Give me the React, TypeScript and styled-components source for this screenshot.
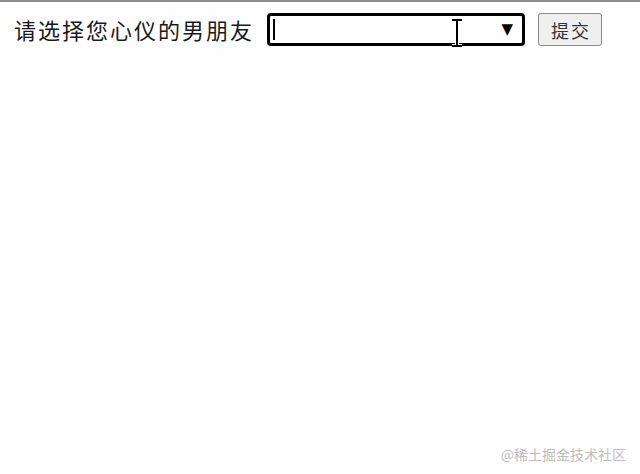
import React from 'react';
import styled, { createGlobalStyle } from 'styled-components';

const GlobalStyle = createGlobalStyle`
  html, body {
    margin: 0;
    padding: 0;
    background: #fefefe;
  }
  body {
    border-top: 2px solid #8c8c8c;
    min-height: 472px;
    font-family: "Noto Sans CJK SC", "Liberation Serif", serif;
  }
`;

const Page = styled.div`
  position: relative;
  height: 472px;
`;

const Form = styled.form`
  display: flex;
  align-items: center;
  gap: 13px;
  padding: 11px 0 0 14px;
`;

const Label = styled.label`
  width: 240px;
  font-size: 22px;
  letter-spacing: 2px;
  color: #1a1a1a;
  line-height: 33px;
  white-space: nowrap;
`;

const Field = styled.div`
  position: relative;
  box-sizing: border-box;
  width: 258px;
  height: 33px;
  border: 3px solid #000;
  border-radius: 4px;
  background: #fff;
  display: flex;
  align-items: center;
`;

const TextInput = styled.input`
  flex: 1;
  min-width: 0;
  height: 100%;
  border: none;
  outline: none;
  background: transparent;
  padding: 0 4px;
  font-size: 16px;
`;

const Caret = styled.span`
  position: absolute;
  left: 3px;
  top: 3px;
  width: 2px;
  height: 21px;
  background: #000;
`;

const Arrow = styled.span`
  font-family: "DejaVu Sans", sans-serif;
  font-size: 15px;
  color: #000;
  margin-right: 9px;
  line-height: 1;
`;

const Beam = styled.svg`
  position: absolute;
  left: 181px;
  top: 3px;
  pointer-events: none;
`;

const Submit = styled.button`
  box-sizing: border-box;
  width: 64px;
  height: 33px;
  border: 1px solid #8a8a8a;
  border-radius: 3px;
  background: #efefef;
  color: #333;
  font-family: "Noto Sans CJK SC", serif;
  font-size: 18px;
  letter-spacing: 2px;
  padding: 0 0 0 2px;
`;

const Watermark = styled.div`
  position: absolute;
  right: 14px;
  bottom: 10px;
  font-family: "Noto Sans CJK SC", sans-serif;
  font-size: 14px;
  color: #bdbdbd;
`;

export default function App() {
  return (
    <Page>
      <GlobalStyle />
      <Form onSubmit={(e) => e.preventDefault()}>
        <Label htmlFor="bf">请选择您心仪的男朋友</Label>
        <Field>
          <TextInput id="bf" list="boys" />
          <Caret />
          <Beam width="12" height="28" viewBox="0 0 12 28">
            <path d="M1 1h10M6 1v26M1 27h10" stroke="#fff" strokeWidth="4" fill="none" />
            <path d="M1 1h10M6 1v26M1 27h10" stroke="#000" strokeWidth="2" fill="none" />
          </Beam>
          <Arrow>▼</Arrow>
        </Field>
        <Submit type="submit">提交</Submit>
      </Form>
      <Watermark>@稀土掘金技术社区</Watermark>
    </Page>
  );
}
